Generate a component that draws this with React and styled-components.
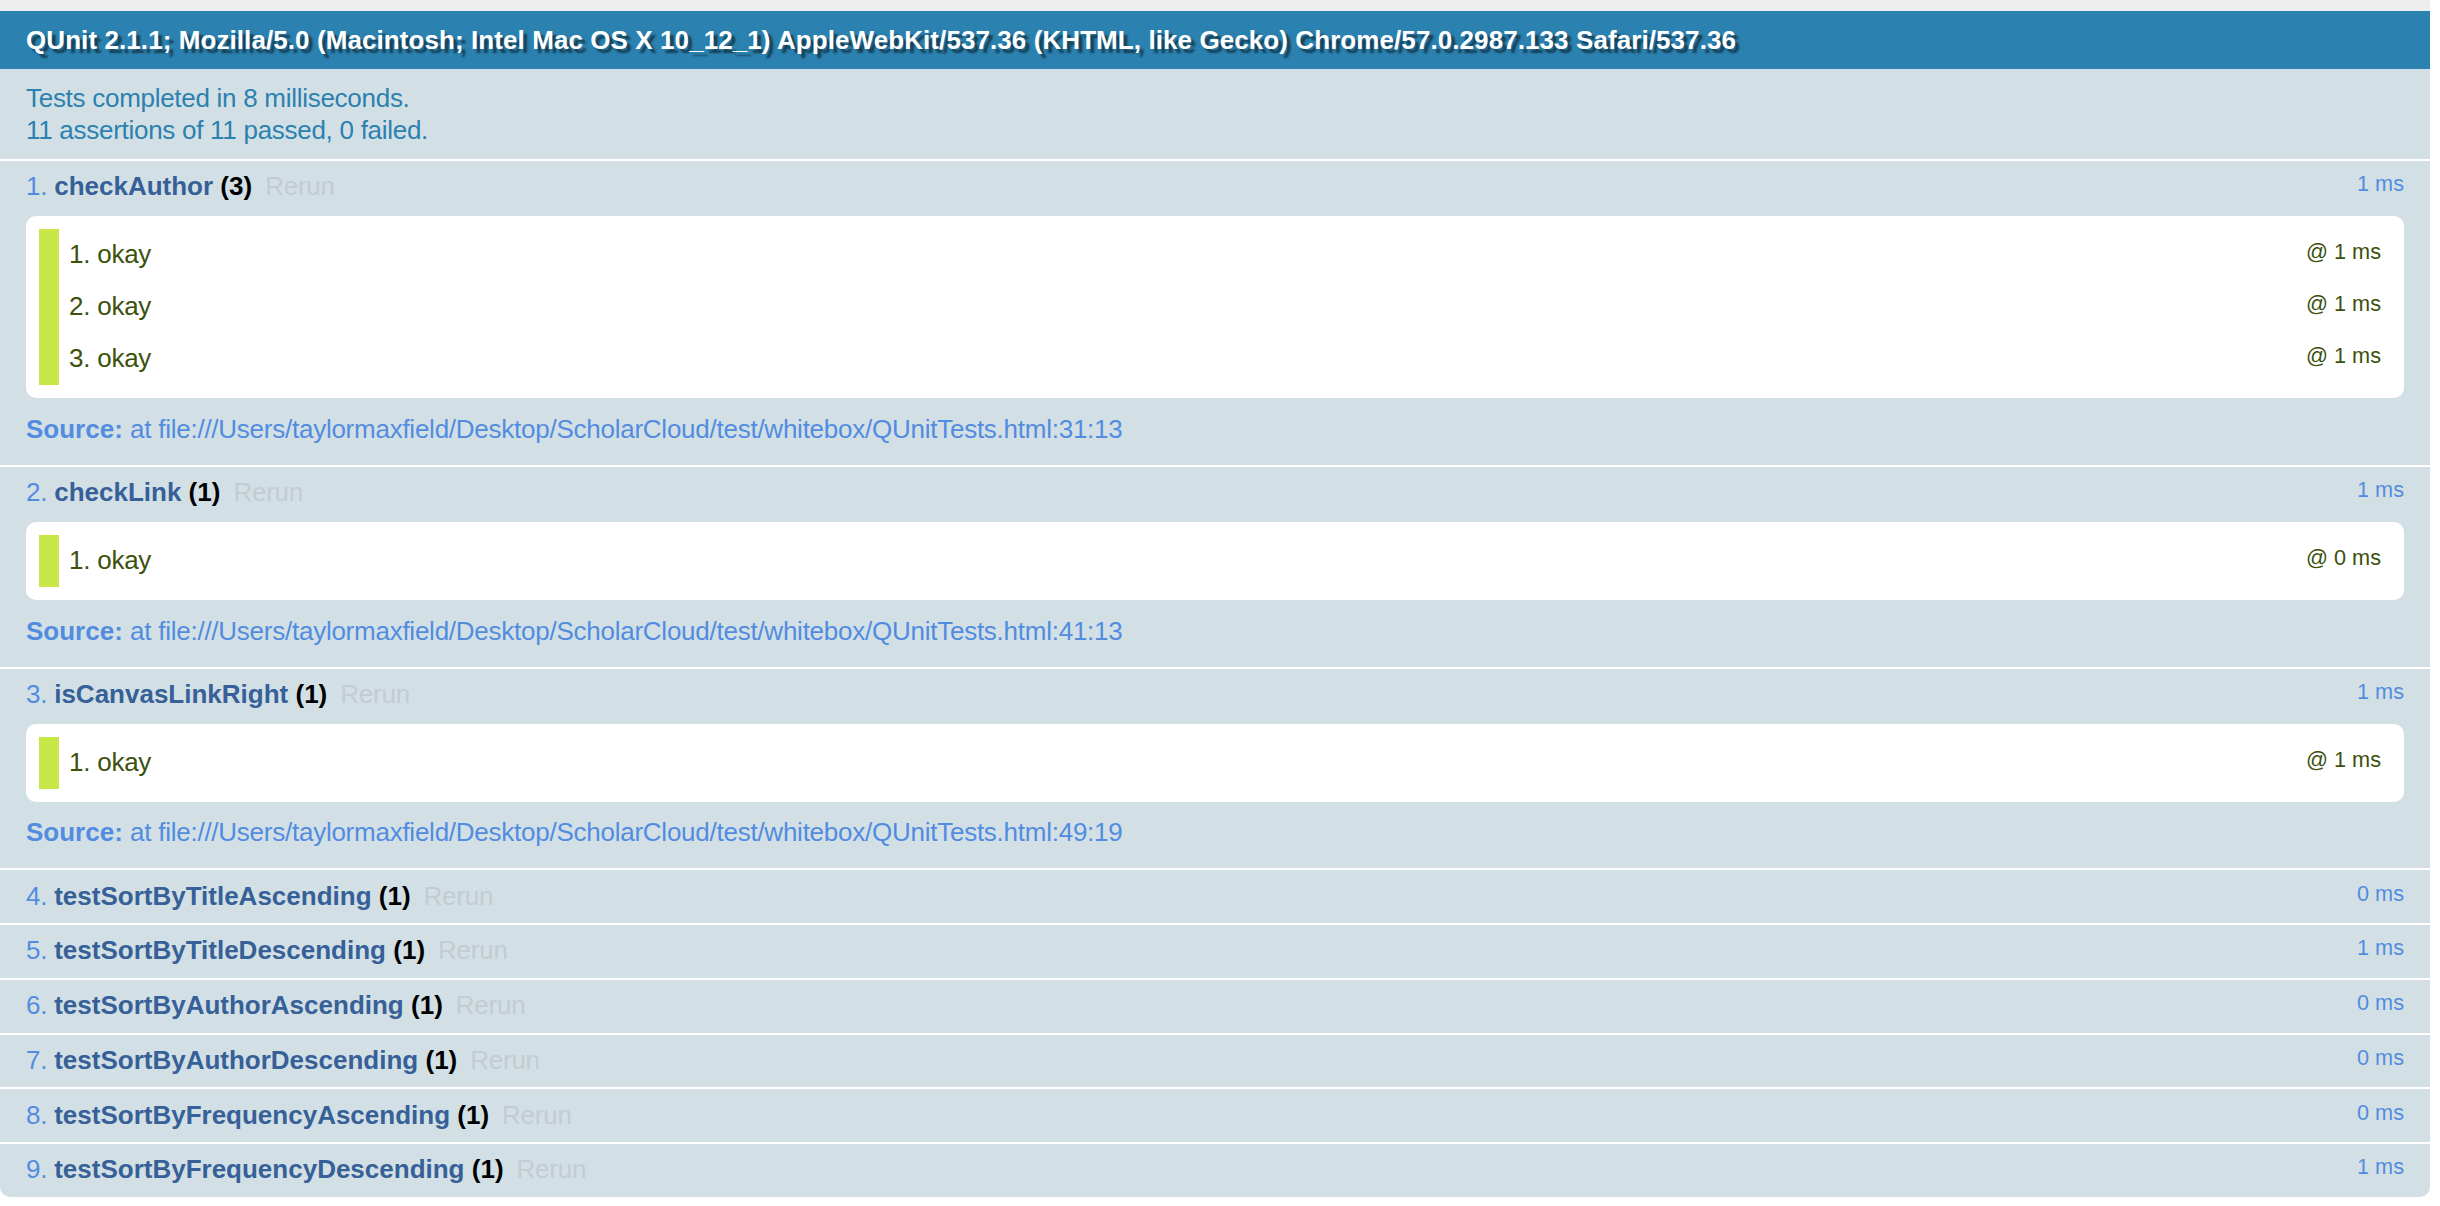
import React from 'react';
import styled, { createGlobalStyle } from 'styled-components';

const GlobalStyle = createGlobalStyle`
  html, body {
    margin: 0;
    padding: 0;
    background: #fff;
  }
`;

const FONT = `"Liberation Sans", Arial, Helvetica, sans-serif`;

const Page = styled.div`
  width: 2430px;
  font-family: ${FONT};
`;

const Toolbar = styled.div`
  height: 11px;
  background: #eee;
`;

const UserAgent = styled.h2`
  margin: 0;
  padding: 13px 26px;
  background-color: #2b81af;
  color: #fff;
  font-size: 26px;
  line-height: 32px;
  font-weight: 700;
  letter-spacing: 0.08px;
  text-shadow: rgba(0, 0, 0, 0.5) 4px 4px 2px;
`;

const TestResult = styled.p`
  margin: 0;
  padding: 13px 26px;
  color: #2b81af;
  background-color: #d2e0e6;
  border-bottom: 2px solid #fff;
  font-size: 26px;
  line-height: 32px;
  letter-spacing: -0.28px;
`;

const Tests = styled.ol`
  margin: 0;
  padding: 0;
  list-style-position: inside;
`;

const TestItem = styled.li`
  padding: 10.4px 26px;
  border-bottom: 2px solid #fff;
  color: #528ce0;
  background-color: #d2e0e6;
  font-size: 26px;
  line-height: 1.23;
  letter-spacing: -0.25px;

  &:last-child {
    border-bottom: none;
    border-radius: 0 0 10px 10px;
  }
`;

const Title = styled.strong`
  font-weight: 700;
  letter-spacing: 0;
  cursor: pointer;
`;

const TestName = styled.span`
  color: #366097;
`;

const Counts = styled.b`
  color: #000;
`;

const Rerun = styled.a`
  padding: 0 13px;
  color: #c2ccd1;
  text-decoration: none;
`;

const Runtime = styled.span`
  float: right;
  font-size: 21.7px;
  letter-spacing: 0;
`;

const AssertList = styled.ol`
  margin: 13px 0 0;
  padding: 13px;
  background-color: #fff;
  border-radius: 10px;
  list-style-position: inside;
`;

const AssertItem = styled.li`
  padding: 10px;
  color: #3c510c;
  background-color: #fff;
  border-left: 20px solid #c6e746;
`;

const Source = styled.p`
  margin: 15.6px 0 8.5px;

  strong {
    letter-spacing: 0;
  }
`;

const PATH = 'file:///Users/taylormaxfield/Desktop/ScholarCloud/test/whitebox/QUnitTests.html';

const tests = [
  { name: 'checkAuthor', runtime: 1, asserts: [1, 1, 1], line: '31:13' },
  { name: 'checkLink', runtime: 1, asserts: [0], line: '41:13' },
  { name: 'isCanvasLinkRight', runtime: 1, asserts: [1], line: '49:19' },
  { name: 'testSortByTitleAscending', runtime: 0, count: 1 },
  { name: 'testSortByTitleDescending', runtime: 1, count: 1 },
  { name: 'testSortByAuthorAscending', runtime: 0, count: 1 },
  { name: 'testSortByAuthorDescending', runtime: 0, count: 1 },
  { name: 'testSortByFrequencyAscending', runtime: 0, count: 1 },
  { name: 'testSortByFrequencyDescending', runtime: 1, count: 1 },
];

const Test = ({ test }) => {
  const count = test.asserts ? test.asserts.length : test.count;
  return (
    <TestItem>
      <Title>
        <TestName>{test.name}</TestName> <Counts>({count})</Counts>
      </Title>
      <Rerun href="#">Rerun</Rerun>
      <Runtime>{test.runtime} ms</Runtime>
      {test.asserts && (
        <>
          <AssertList>
            {test.asserts.map((ms, i) => (
              <AssertItem key={i}>
                <span>okay</span>
                <Runtime>@ {ms} ms</Runtime>
              </AssertItem>
            ))}
          </AssertList>
          <Source>
            <strong>Source: </strong>at {PATH}:{test.line}
          </Source>
        </>
      )}
    </TestItem>
  );
};

export default function App() {
  return (
    <Page>
      <GlobalStyle />
      <Toolbar />
      <UserAgent>
        QUnit 2.1.1; Mozilla/5.0 (Macintosh; Intel Mac OS X 10_12_1) AppleWebKit/537.36 (KHTML, like Gecko) Chrome/57.0.2987.133 Safari/537.36
      </UserAgent>
      <TestResult>
        Tests completed in 8 milliseconds.
        <br />
        11 assertions of 11 passed, 0 failed.
      </TestResult>
      <Tests>
        {tests.map((t) => (
          <Test key={t.name} test={t} />
        ))}
      </Tests>
    </Page>
  );
}
